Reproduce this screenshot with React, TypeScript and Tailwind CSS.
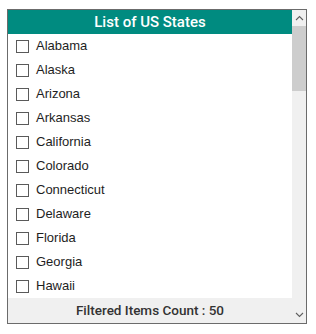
const STATES = [
  'Alabama',
  'Alaska',
  'Arizona',
  'Arkansas',
  'California',
  'Colorado',
  'Connecticut',
  'Delaware',
  'Florida',
  'Georgia',
  'Hawaii',
];

const Chevron = ({ up }: { up?: boolean }) => (
  <svg width="9" height="6" viewBox="0 0 9 6" className="block">
    <path
      d={up ? 'M1 5 L4.5 1.5 L8 5' : 'M1 1 L4.5 4.5 L8 1'}
      fill="none"
      stroke="#606060"
      strokeWidth="1.1"
    />
  </svg>
);

export default function App() {
  return (
    <div className="pl-[7px] pt-[9px]">
      <div className="flex h-[315px] w-[300px] border border-[#6b6b6b] bg-white">
        {/* list column */}
        <div className="flex w-[284px] flex-col">
          <div
            className="flex h-[24px] items-center justify-center bg-[#008b80] text-[15px] font-medium text-white"
            style={{ fontFamily: 'Roboto, sans-serif' }}
          >
            List of US States
          </div>
          <div className="h-[264px] overflow-hidden" style={{ fontFamily: '"Liberation Sans", Arial, sans-serif' }}>
            {STATES.map(s => (
              <div key={s} className="flex h-[24px] items-center">
                <span className="ml-[8px] h-[13px] w-[13px] border border-[#5a5a5a] bg-white" />
                <span className="ml-[7px] text-[13px] text-[#1e1e1e]">{s}</span>
              </div>
            ))}
          </div>
          <div
            className="flex h-[25px] items-center justify-center bg-[#f0f0f0] text-[13.5px] font-medium text-[#333333]"
            style={{ fontFamily: 'Roboto, sans-serif' }}
          >
            Filtered Items Count : 50
          </div>
        </div>

        {/* scrollbar */}
        <div className="flex w-[14px] flex-col bg-[#f0f0f0]">
          <div className="flex h-[16px] items-center justify-center">
            <Chevron up />
          </div>
          <div className="h-[65px] bg-[#cdcdcd]" />
          <div className="flex-1" />
          <div className="flex h-[16px] items-center justify-center">
            <Chevron />
          </div>
        </div>
      </div>
    </div>
  );
}
